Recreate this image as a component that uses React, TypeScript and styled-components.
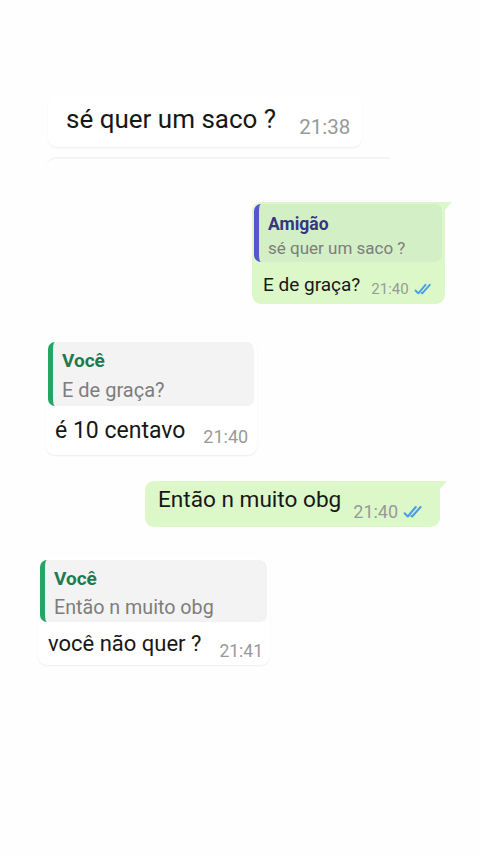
import styled, { createGlobalStyle } from 'styled-components';

const GlobalStyle = createGlobalStyle`
  html, body {
    margin: 0;
    padding: 0;
    background: #fefefe;
  }
  body {
    font-family: Roboto, "Noto Sans", "Liberation Sans", sans-serif;
  }
`;

const Screen = styled.div`
  width: 480px;
  height: 856px;
  overflow: hidden;
  background: #fefefe;
  display: flex;
  flex-direction: column;
`;

const Row = styled.div<{ $top: number; $left?: number; $right?: number; $end?: boolean }>`
  display: flex;
  justify-content: ${(p) => (p.$end ? 'flex-end' : 'flex-start')};
  margin-top: ${(p) => p.$top}px;
  padding-left: ${(p) => p.$left ?? 0}px;
  padding-right: ${(p) => p.$right ?? 0}px;
`;

const Bubble = styled.div<{ $mine?: boolean; $width: number; $height: number }>`
  position: relative;
  box-sizing: border-box;
  width: ${(p) => p.$width}px;
  height: ${(p) => p.$height}px;
  padding: 2px 3px 0 2px;
  border-radius: 9px;
  border-top-right-radius: ${(p) => (p.$mine ? '0' : '9px')};
  background: ${(p) => (p.$mine ? '#dcf8c8' : '#ffffff')};
  box-shadow: ${(p) => (p.$mine ? 'none' : '0 1px 2px rgba(0, 0, 0, 0.07)')};
  display: flex;
  flex-direction: column;
`;

const Tail = styled.span`
  position: absolute;
  top: 0;
  right: -7px;
  width: 0;
  height: 0;
  border-top: 9px solid #dcf8c8;
  border-right: 8px solid transparent;
`;

const Quote = styled.div<{ $bar: string; $mine?: boolean; $height: number; $pt: number; $gap: number }>`
  box-sizing: border-box;
  height: ${(p) => p.$height}px;
  border-radius: 7px;
  border-left: 5px solid ${(p) => p.$bar};
  background: ${(p) => (p.$mine ? '#d3efc5' : '#f3f3f3')};
  padding: ${(p) => p.$pt}px 10px 0 9px;
  display: flex;
  flex-direction: column;
  gap: ${(p) => p.$gap}px;
`;

const QuoteName = styled.div<{ $color: string; $size: number }>`
  font-size: ${(p) => p.$size}px;
  font-weight: 700;
  color: ${(p) => p.$color};
  line-height: 1.2;
`;

const QuoteText = styled.div<{ $size: number }>`
  font-size: ${(p) => p.$size}px;
  color: #7d7d7d;
  line-height: 1.2;
`;

const Line = styled.div<{ $pad: number; $pt: number }>`
  display: flex;
  align-items: flex-start;
  padding-top: ${(p) => p.$pt}px;
  padding-left: ${(p) => p.$pad}px;
`;

const Text = styled.span<{ $size: number }>`
  font-size: ${(p) => p.$size}px;
  line-height: 1.15;
  color: #171717;
  white-space: nowrap;
`;

const Meta = styled.span<{ $gap: number; $drop: number }>`
  display: flex;
  align-items: center;
  gap: 5px;
  margin-left: ${(p) => p.$gap}px;
  margin-top: ${(p) => p.$drop}px;
`;

const Time = styled.span<{ $size: number }>`
  font-size: ${(p) => p.$size}px;
  line-height: 1.15;
  color: #999999;
  white-space: nowrap;
`;

const Edge = styled.div`
  margin-top: 10px;
  margin-left: 46px;
  width: 344px;
  height: 8px;
  border-top: 2px solid #f3f3f3;
  border-top-left-radius: 10px;
`;

function Ticks({ size }: { size: number }) {
  return (
    <svg width={size} height={size * 0.7} viewBox="0 0 18 12" fill="none">
      <path d="M1.5 7.2 L4.3 10 L11.5 1.5" stroke="#4a9ee6" strokeWidth="1.9" strokeLinecap="round" strokeLinejoin="round" />
      <path d="M7.6 9.6 L8.2 10 L15.8 1.5" stroke="#4a9ee6" strokeWidth="1.9" strokeLinecap="round" strokeLinejoin="round" />
    </svg>
  );
}

export default function App() {
  return (
    <Screen>
      <GlobalStyle />

      <Row $top={95} $left={48}>
        <Bubble $width={314} $height={52}>
          <Line $pad={16} $pt={8}>
            <Text $size={26}>sé quer um saco ?</Text>
            <Meta $gap={23} $drop={11}>
              <Time $size={20.5}>21:38</Time>
            </Meta>
          </Line>
        </Bubble>
      </Row>
      <Edge />

      <Row $top={35} $end $right={35}>
        <Bubble $mine $width={193} $height={102}>
          <Tail />
          <Quote $mine $bar="#5a54d0" $height={58} $pt={10} $gap={3}>
            <QuoteName $color="#36367e" $size={17.5}>Amigão</QuoteName>
            <QuoteText $size={17}>sé quer um saco ?</QuoteText>
          </Quote>
          <Line $pad={9} $pt={12}>
            <Text $size={19}>E de graça?</Text>
            <Meta $gap={11} $drop={7}>
              <Time $size={15}>21:40</Time>
              <Ticks size={18} />
            </Meta>
          </Line>
        </Bubble>
      </Row>

      <Row $top={36} $left={46}>
        <Bubble $width={211} $height={115}>
          <Quote $bar="#23a563" $height={64} $pt={8} $gap={5}>
            <QuoteName $color="#1e7a52" $size={19}>Você</QuoteName>
            <QuoteText $size={20}>E de graça?</QuoteText>
          </Quote>
          <Line $pad={7} $pt={12}>
            <Text $size={23}>é 10 centavo</Text>
            <Meta $gap={18} $drop={9}>
              <Time $size={18}>21:40</Time>
            </Meta>
          </Line>
        </Bubble>
      </Row>

      <Row $top={26} $end $right={40}>
        <Bubble $mine $width={295} $height={46}>
          <Tail />
          <Line $pad={11} $pt={4}>
            <Text $size={22.6}>Então n muito obg</Text>
            <Meta $gap={12} $drop={15}>
              <Time $size={18}>21:40</Time>
              <Ticks size={20} />
            </Meta>
          </Line>
        </Bubble>
      </Row>

      <Row $top={31} $left={38}>
        <Bubble $width={232} $height={107}>
          <Quote $bar="#23a563" $height={62} $pt={8} $gap={5}>
            <QuoteName $color="#1e7a52" $size={19}>Você</QuoteName>
            <QuoteText $size={19.7}>Então n muito obg</QuoteText>
          </Quote>
          <Line $pad={8} $pt={9}>
            <Text $size={22}>você não quer ?</Text>
            <Meta $gap={18} $drop={10}>
              <Time $size={17.5}>21:41</Time>
            </Meta>
          </Line>
        </Bubble>
      </Row>
    </Screen>
  );
}
